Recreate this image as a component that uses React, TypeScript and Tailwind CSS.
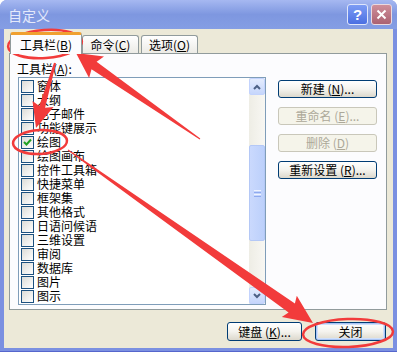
import React from "react";

const items = [
    "窗体",
    "大纲",
    "电子邮件",
    "功能键展示",
    "绘图",
    "绘图画布",
    "控件工具箱",
    "快捷菜单",
    "框架集",
    "其他格式",
    "日语问候语",
    "三维设置",
    "审阅",
    "数据库",
    "图片",
    "图示",
];

type Pt = [number, number];

// tapered red arrow: thin tail, wide shaft near the head
function arrowPoints(tail: Pt, tip: Pt, tailW: number, baseW: number, headLen: number, headW: number) {
    const dx = tail[0] - tip[0];
    const dy = tail[1] - tip[1];
    const len = Math.hypot(dx, dy);
    const ux = dx / len;
    const uy = dy / len;
    const nx = -uy;
    const ny = ux;
    const bx = tip[0] + ux * headLen;
    const by = tip[1] + uy * headLen;
    const wx = tip[0] + ux * (headLen + 3);
    const wy = tip[1] + uy * (headLen + 3);
    const p = (x: number, y: number) => `${x.toFixed(1)},${y.toFixed(1)}`;
    return [
        p(tip[0], tip[1]),
        p(wx + (nx * headW) / 2, wy + (ny * headW) / 2),
        p(bx + (nx * baseW) / 2, by + (ny * baseW) / 2),
        p(tail[0] + (nx * tailW) / 2, tail[1] + (ny * tailW) / 2),
        p(tail[0] - (nx * tailW) / 2, tail[1] - (ny * tailW) / 2),
        p(bx - (nx * baseW) / 2, by - (ny * baseW) / 2),
        p(wx - (nx * headW) / 2, wy - (ny * headW) / 2),
    ].join(" ");
}

function U({ c }: { c: string }) {
    return <span className="underline underline-offset-1">{c}</span>;
}

function CheckBox({ checked }: { checked?: boolean }) {
    return (
        <span className="w-[13px] h-[13px] shrink-0 border border-[#1c5180] bg-linear-to-br from-[#dcdcd7] to-white flex items-center justify-center">
            {checked && (
                <svg width="11" height="11" viewBox="0 0 11 11">
                    <polyline points="2,5 4.5,7.5 9,2.5" fill="none" stroke="#21a121" strokeWidth="2" />
                </svg>
            )}
        </span>
    );
}

function XpButton({
    children,
    disabled,
    isDefault,
    className = "",
}: {
    children: React.ReactNode;
    disabled?: boolean;
    isDefault?: boolean;
    className?: string;
}) {
    return (
        <div
            className={`flex items-center justify-center rounded-[3px] border text-[12px] leading-none ${
                disabled
                    ? "border-[#c9c7ba] bg-[#f5f4ea] text-[#aca899]"
                    : "border-[#003c74] bg-linear-to-b from-white via-[#f4f3ee] to-[#dcd8cc] text-black"
            } ${isDefault ? "shadow-[inset_0_0_0_1px_#a9c4f5,inset_0_0_0_2px_#cfe0fb]" : ""} ${className}`}
        >
            {children}
        </div>
    );
}

export default function App() {
    return (
        <div className="relative w-[397px] h-[352px] overflow-hidden bg-white font-['Noto_Sans_CJK_SC','Noto_Sans',sans-serif] text-[12px] text-black">
            {/* window frame */}
            <div className="flex flex-col w-full h-full rounded-t-[7px] bg-[#7b90e1] border-b-[1px] border-b-[#5566cc]">
                {/* title bar */}
                <div className="h-[29px] shrink-0 rounded-t-[7px] bg-linear-to-b from-[#a6b8f1] via-[#7e97e0] to-[#859ee4] flex items-center pl-[8px] pr-[5px]">
                    <span className="text-[14px] text-[#e4e9fb] leading-none">自定义</span>
                    <div className="ml-auto flex gap-[3px]">
                        <div className="w-[21px] h-[21px] rounded-[3px] border border-[#dfe6fb] bg-linear-to-b from-[#7d9cf4] to-[#4b6fe2] flex items-center justify-center text-white font-bold text-[15px] leading-none font-['Liberation_Sans',sans-serif]">
                            ?
                        </div>
                        <div className="w-[21px] h-[21px] rounded-[3px] border border-[#ead9df] bg-linear-to-b from-[#cf8f9a] to-[#ab6272] flex items-center justify-center">
                            <svg width="11" height="11" viewBox="0 0 11 11">
                                <path d="M1.5 1.5 L9.5 9.5 M9.5 1.5 L1.5 9.5" stroke="white" strokeWidth="2" />
                            </svg>
                        </div>
                    </div>
                </div>

                {/* client area */}
                <div className="flex-1 mx-[4px] mb-[3px] bg-[#ece9d8] flex flex-col">
                    {/* tabs */}
                    <div className="flex items-end h-[24px] pl-[6px] pt-[3px]">
                        <div className="relative z-10 w-[72px] h-[22px] -mb-px rounded-t-[3px] border-x border-[#919b9c] border-t-[3px] border-t-[#f0a030] bg-[#fcfcfe] flex items-center justify-center">
                            <span>
                                工具栏(<U c="B" />)
                            </span>
                        </div>
                        <div className="w-[57px] h-[18px] rounded-t-[3px] border border-b-0 border-[#919b9c] bg-linear-to-b from-white to-[#ecebe6] flex items-center justify-center">
                            <span>
                                命令(<U c="C" />)
                            </span>
                        </div>
                        <div className="ml-[2px] w-[57px] h-[18px] rounded-t-[3px] border border-b-0 border-[#919b9c] bg-linear-to-b from-white to-[#ecebe6] flex items-center justify-center">
                            <span>
                                选项(<U c="O" />)
                            </span>
                        </div>
                    </div>

                    {/* tab panel */}
                    <div className="ml-[5px] w-[378px] h-[257px] border border-[#919b9c] bg-[#fcfcfe] flex flex-col pl-[8px] pt-[8px]">
                        <div className="leading-[14px] -ml-px">
                            工具栏(<U c="A" />):
                        </div>
                        <div className="flex mt-[1px]">
                            {/* list box */}
                            <div className="w-[248px] h-[228px] border border-[#7f9db9] bg-white flex">
                                <div className="flex-1 flex flex-col pt-[1px]">
                                    {items.map((name) => (
                                        <div key={name} className="h-[14px] flex items-center pl-[2px] gap-[3px] leading-[14px]">
                                            <CheckBox checked={name === "绘图"} />
                                            <span>{name}</span>
                                        </div>
                                    ))}
                                </div>
                                {/* scrollbar */}
                                <div className="w-[16px] flex flex-col bg-linear-to-r from-[#eeede5] to-[#f8f7f3]">
                                    <div className="h-[17px] rounded-[2px] border border-[#c3d3fd] bg-linear-to-b from-[#e4ecfd] to-[#c6d6fc] flex items-center justify-center">
                                        <svg width="8" height="6" viewBox="0 0 8 6">
                                            <polyline points="1,5 4,2 7,5" fill="none" stroke="#4d6185" strokeWidth="2" />
                                        </svg>
                                    </div>
                                    <div className="h-[50px]" />
                                    <div className="h-[96px] rounded-[2px] border border-[#b4c8f6] bg-linear-to-r from-[#cad9fd] to-[#bcd0fb] flex flex-col items-center justify-center gap-[1px]">
                                        <span className="w-[7px] h-px bg-[#eef3fe]" />
                                        <span className="w-[7px] h-px bg-[#8faaef]" />
                                        <span className="w-[7px] h-px bg-[#eef3fe]" />
                                        <span className="w-[7px] h-px bg-[#8faaef]" />
                                    </div>
                                    <div className="flex-1" />
                                    <div className="h-[17px] rounded-[2px] border border-[#c3d3fd] bg-linear-to-b from-[#e4ecfd] to-[#c6d6fc] flex items-center justify-center">
                                        <svg width="8" height="6" viewBox="0 0 8 6">
                                            <polyline points="1,1 4,4 7,1" fill="none" stroke="#4d6185" strokeWidth="2" />
                                        </svg>
                                    </div>
                                </div>
                            </div>

                            {/* side buttons */}
                            <div className="ml-[12px] pt-[3px] flex flex-col gap-[9px]">
                                <XpButton className="w-[99px] h-[18px]">
                                    新建 (<U c="N" />)...
                                </XpButton>
                                <XpButton disabled className="w-[99px] h-[18px]">
                                    重命名 (<U c="E" />)...
                                </XpButton>
                                <XpButton disabled className="w-[99px] h-[18px]">
                                    删除 (<U c="D" />)
                                </XpButton>
                                <XpButton className="w-[99px] h-[18px]">
                                    重新设置 (<U c="R" />)...
                                </XpButton>
                            </div>
                        </div>
                    </div>

                    {/* bottom buttons */}
                    <div className="flex justify-end gap-[13px] pr-[7px] mt-[12px]">
                        <XpButton className="w-[75px] h-[19px]">
                            键盘 (<U c="K" />)...
                        </XpButton>
                        <XpButton isDefault className="w-[71px] h-[19px]">
                            关闭
                        </XpButton>
                    </div>
                </div>
            </div>

            {/* red annotations drawn over the dialog */}
            <svg className="absolute inset-0 pointer-events-none" width="397" height="352" viewBox="0 0 397 352">
                <g fill="#f23b3b">
                    <polygon points={arrowPoints([200, 139], [76, 53], 1, 9, 22, 26)} />
                    <polygon points={arrowPoints([55, 63], [36, 128], 2, 6, 22, 22)} />
                    <polygon points={arrowPoints([68, 150], [313, 323], 1, 11, 26, 26)} />
                </g>
                <g fill="none" stroke="#f23b3b" strokeWidth="2.5">
                    <ellipse cx="45" cy="44" rx="37" ry="14" transform="rotate(-4 45 44)" />
                    <ellipse cx="40" cy="142" rx="27" ry="12" transform="rotate(-3 40 142)" />
                    <ellipse cx="348" cy="333" rx="45" ry="14" transform="rotate(-2 348 333)" />
                </g>
            </svg>
        </div>
    );
}
